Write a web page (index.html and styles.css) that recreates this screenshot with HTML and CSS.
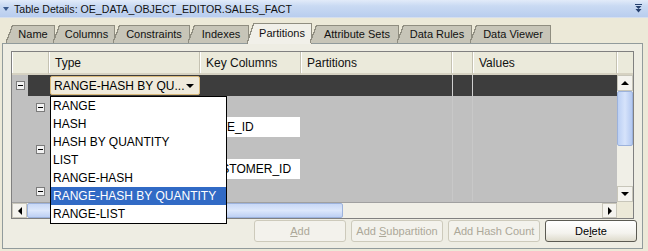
FILE: index.html
```html
<!DOCTYPE html>
<html>
<head>
<meta charset="utf-8">
<link rel="stylesheet" href="styles.css">
</head>
<body>
<div class="titlebar">
  <span class="tri"></span>
  <span class="title">Table Details: OE_DATA_OBJECT_EDITOR.SALES_FACT</span>
  <svg class="pin" width="7" height="9" viewBox="0 0 7 9"><path d="M0 0.5H7" stroke="#25406e" stroke-width="1"/><path d="M0.5 2H6.5L3.5 5Z M0.5 5H6.5L3.5 8.5Z" fill="#25406e"/></svg>
</div>
<div class="tabs">
  <div class="tab w-name">Name</div>
  <div class="tab w-columns">Columns</div>
  <div class="tab w-constraints">Constraints</div>
  <div class="tab w-indexes">Indexes</div>
  <div class="tab w-partitions active">Partitions</div>
  <div class="tab w-attr">Attribute Sets</div>
  <div class="tab w-rules">Data Rules</div>
  <div class="tab w-viewer">Data Viewer</div>
</div>
<div class="panel">
  <div class="tablebox">
    <div class="thead">
      <div class="th c-row"></div>
      <div class="th c-type">Type</div>
      <div class="th c-key">Key Columns</div>
      <div class="th c-part">Partitions</div>
      <div class="th c-narrow"></div>
      <div class="th c-val">Values</div>
    </div>
    <div class="th corner"></div>
    <div class="tbody">
      <div class="row dark">
        <div class="cell c-row"><span class="gutter"><span class="minus"></span></span><span class="rowhead"></span></div>
        <div class="cell c-type"><div class="combo"><span class="combo-text">RANGE-HASH BY QU...</span><span class="combo-arrow"></span></div></div>
        <div class="cell c-key"></div>
        <div class="cell c-part"></div>
        <div class="cell c-narrow sep"></div>
        <div class="cell c-val"></div>
      </div>
      <div class="row grey">
        <div class="cell c-row"><span class="minus indent"></span></div>
        <div class="cell c-type"></div><div class="cell c-key"></div><div class="cell c-part"></div><div class="cell c-narrow sep"></div><div class="cell c-val"></div>
      </div>
      <div class="row grey">
        <div class="cell c-row"></div>
        <div class="cell c-type"></div>
        <div class="cell c-key"><div class="field">DATE_ID</div></div>
        <div class="cell c-part"></div><div class="cell c-narrow sep"></div><div class="cell c-val"></div>
      </div>
      <div class="row grey">
        <div class="cell c-row"><span class="minus indent"></span></div>
        <div class="cell c-type"></div><div class="cell c-key"></div><div class="cell c-part"></div><div class="cell c-narrow sep"></div><div class="cell c-val"></div>
      </div>
      <div class="row grey">
        <div class="cell c-row"></div>
        <div class="cell c-type"></div>
        <div class="cell c-key"><div class="field">CUSTOMER_ID</div></div>
        <div class="cell c-part"></div><div class="cell c-narrow sep"></div><div class="cell c-val"></div>
      </div>
      <div class="row grey">
        <div class="cell c-row"><span class="minus indent"></span></div>
        <div class="cell c-type"></div><div class="cell c-key"></div><div class="cell c-part"></div><div class="cell c-narrow sep"></div><div class="cell c-val"></div>
      </div>
    </div>
    <div class="vscroll">
      <div class="sbtn up"><span class="arr-up"></span></div>
      <div class="vthumb"><span class="grip-v"></span></div>
      <div class="vtrack"></div>
      <div class="sbtn down"><span class="arr-down"></span></div>
    </div>
    <div class="hscroll">
      <div class="sbtn hb"><span class="arr-left"></span></div>
      <div class="hthumb"></div>
      <div class="htrack"></div>
      <div class="sbtn hb"><span class="arr-right"></span></div>
    </div>
    <div class="scorner"></div>

    <ul class="dropdown">
      <li>RANGE</li>
      <li>HASH</li>
      <li>HASH BY QUANTITY</li>
      <li>LIST</li>
      <li>RANGE-HASH</li>
      <li class="sel">RANGE-HASH BY QUANTITY</li>
      <li>RANGE-LIST</li>
    </ul>
  </div>
  <div class="buttons">
    <button class="btn" disabled><u>A</u>dd</button>
    <button class="btn" disabled>Add <u>S</u>ubpartition</button>
    <button class="btn" disabled>Add Hash Count</button>
    <button class="btn primary">De<u>l</u>ete</button>
  </div>
</div>
</body>
</html>
```

FILE: styles.css
```css
* { box-sizing: border-box; }
html, body { margin: 0; padding: 0; }
body {
  width: 648px;
  height: 251px;
  overflow: hidden;
  background: #ece9d8;
  font-family: "Liberation Sans", Arial, sans-serif;
  font-size: 11px;
  color: #000;
  padding-left: 2px;
}
.titlebar {
  margin-left: -2px;
  height: 18px;
  display: flex;
  align-items: center;
  background: linear-gradient(#e2ebf9 0%, #c9daf3 35%, #b9cdee 100%);
  border-bottom: 1px solid #d6dfee;
  padding-left: 3px;
  padding-right: 6px;
}
.tri {
  width: 0; height: 0;
  border-left: 3px solid transparent;
  border-right: 3px solid transparent;
  border-top: 4px solid #3b5a8c;
  margin-right: 5px;
  margin-top: 1px;
}
.title { font-size: 10.6px; color: #111; flex: 1; }
.pin { display: block; }

.tabs {
  display: flex;
  align-items: flex-end;
  height: 20px;
  margin-top: 5px;
  padding-left: 4px;
  position: relative;
  z-index: 1;
}
.tab {
  height: 18px;
  margin-right: -2px;
  display: flex;
  align-items: center;
  justify-content: center;
  padding-left: 6px;
  color: #111;
  border-right: 1px solid #8f8d80;
  background:
    linear-gradient(to bottom right, transparent calc(50% - 0.9px), #8f8d80 calc(50% - 0.9px), #8f8d80 calc(50% + 0.4px), #c7c5b8 calc(50% + 0.4px)) 0 0 / 7px 100% no-repeat,
    linear-gradient(#8f8d80, #8f8d80) 7px 0 / 100% 1px no-repeat,
    linear-gradient(#c7c5b8, #c7c5b8) 7px 0 / 100% 100% no-repeat;
}
.tab.active {
  height: 21px;
  margin-bottom: -1px;
  background:
    linear-gradient(to bottom right, transparent calc(50% - 0.9px), #8f8d80 calc(50% - 0.9px), #8f8d80 calc(50% + 0.4px), #f1f0e9 calc(50% + 0.4px)) 0 0 / 7px 100% no-repeat,
    linear-gradient(#8f8d80, #8f8d80) 7px 0 / 100% 1px no-repeat,
    linear-gradient(#f1f0e9, #f1f0e9) 7px 0 / 100% 100% no-repeat;
  padding-bottom: 1px;
}
.w-name { width: 49px; }
.w-columns { width: 62px; }
.w-constraints { width: 77px; }
.w-indexes { width: 61px; }
.w-partitions { width: 65px; }
.w-attr { width: 89px; }
.w-rules { width: 75px; }
.w-viewer { width: 81px; }

.panel {
  width: 641px;
  height: 206px;
  border: 1px solid #919b9c;
  background: #eeede3;
  padding: 7px 0 0 8px;
}

.tablebox {
  position: relative;
  width: 623px;
  border: 1px solid #808080;
  display: grid;
  grid-template-columns: 605px 16px;
  grid-template-rows: 23px 127px 16px;
  background: #c0c0c0;
  font-size: 12px;
}
.thead { display: flex; }
.th {
  height: 23px;
  background: #ebeadb;
  border-right: 1px solid #c5c2b2;
  border-bottom: 2px solid #d6d2c2;
  box-shadow: inset 1px 0 0 #fff;
  display: flex;
  align-items: center;
  padding-left: 6px;
  color: #111;
}
.corner { border-right: none; }
.c-row { width: 37px; flex: none; }
.c-type { width: 151px; flex: none; }
.c-key { width: 101px; flex: none; }
.c-part { width: 151px; flex: none; }
.c-narrow { width: 21px; flex: none; }
.c-val { width: 144px; flex: none; }

.tbody { overflow: hidden; }
.row { display: flex; height: 21px; }
.row.dark { background: #3d3d3d; }
.row.grey { background: #c0c0c0; }
.cell { height: 21px; position: relative; }
.row .c-row { display: flex; }
.gutter {
  width: 16px; height: 21px;
  background: #c0c0c0;
  display: flex; align-items: center; justify-content: center;
}
.rowhead { flex: 1; }
.minus {
  display: block;
  width: 9px; height: 9px;
  border: 1px solid #7b7b7b;
  background: linear-gradient(#000, #000) center / 5px 1px no-repeat, #f2f2f2;
}
.minus.indent { margin: 7px 0 0 24px; }
.sep { border-left: 1px solid #cfcfcf; border-right: 1px solid #cfcfcf; }
.row.grey .sep { border-color: #c8c8c8; }

.combo {
  position: absolute;
  left: 1px; top: 1px;
  width: 150px; height: 19px;
  background: #efeadb;
  border: 1px solid #d9b97a;
  border-radius: 2px;
  display: flex;
  align-items: center;
  padding-left: 3px;
  font-size: 12px;
}
.combo-text { flex: 1; }
.combo-arrow {
  width: 0; height: 0;
  border-left: 4px solid transparent;
  border-right: 4px solid transparent;
  border-top: 4px solid #000;
  margin-right: 5px;
}
.field {
  position: absolute;
  left: 1px; top: 0;
  width: 99px; height: 20px;
  background: #fff;
  padding-left: 3px;
  display: flex; align-items: center;
  font-size: 12px;
  white-space: nowrap;
}

.vscroll {
  display: flex; flex-direction: column;
  background: #f0efe7;
}
.sbtn {
  background: #f4f3ee;
  border: 1px solid #c8c6ba;
  display: flex; align-items: center; justify-content: center;
}
.up, .down { height: 16px; }
.vthumb {
  height: 55px;
  background: linear-gradient(90deg, #bcd0f4, #d6e3fb 50%, #b4c9f1);
  border: 1px solid #9cb2dc;
  border-radius: 2px;
  display: flex; align-items: center; justify-content: center;
}
.grip-v {
  width: 8px; height: 22px;
  background: radial-gradient(circle, #8fa3c9 0.5px, transparent 0.7px) 0 0 / 2px 2px;
}
.vtrack { flex: 1; }
.arr-up { width: 0; height: 0; border-left: 4px solid transparent; border-right: 4px solid transparent; border-bottom: 4px solid #000; }
.arr-down { width: 0; height: 0; border-left: 4px solid transparent; border-right: 4px solid transparent; border-top: 4px solid #000; }
.arr-left { width: 0; height: 0; border-top: 4px solid transparent; border-bottom: 4px solid transparent; border-right: 4px solid #000; }
.arr-right { width: 0; height: 0; border-top: 4px solid transparent; border-bottom: 4px solid transparent; border-left: 4px solid #000; }

.hscroll {
  display: flex;
  background: #f0efe7;
  border-top: 1px solid #a0a0a0;
}
.hb { width: 15px; }
.hthumb {
  width: 316px;
  background: linear-gradient(#c8d8f6, #dce7fb 50%, #bdd0f3);
  border: 1px solid #9cb2dc;
  border-radius: 2px;
}
.htrack { flex: 1; }
.scorner { background: #ece9d8; }

.dropdown {
  position: absolute;
  left: 38px;
  top: 44px;
  width: 177px;
  margin: 0;
  padding: 0;
  list-style: none;
  background: #fff;
  border: 1px solid #000;
  z-index: 2;
  font-size: 12px;
}
.dropdown li {
  height: 18px;
  line-height: 18px;
  padding-left: 2px;
  white-space: nowrap;
}
.dropdown li.sel { background: #316ac5; color: #fff; }

.buttons {
  display: flex;
  justify-content: flex-end;
  gap: 5px;
  margin-top: 1px;
  padding-right: 5px;
}
.btn {
  width: 92px;
  height: 22px;
  font-family: "Liberation Sans", Arial, sans-serif;
  font-size: 11px;
  border-radius: 3px;
  padding: 0;
}
.btn:disabled {
  background: #f3f2ec;
  border: 1px solid #cdcabb;
  color: #aca899;
}
.btn u { text-decoration: underline; }
.btn.primary {
  background: linear-gradient(#ffffff, #f4f3ee 60%, #dedbcc);
  border: 1px solid #5b5a52;
  color: #000;
}
```
